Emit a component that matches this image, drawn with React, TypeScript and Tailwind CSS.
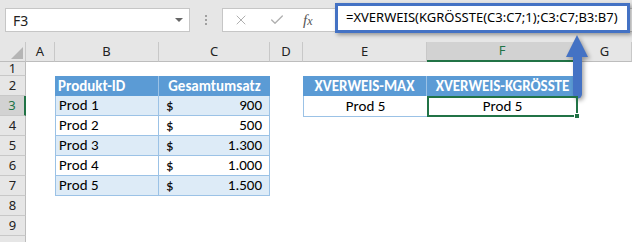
import { X, Check } from 'lucide-react';

// column widths of the sheet (row header first)
const cols = [
  { name: '', w: 'w-[26px]' },
  { name: 'A', w: 'w-[29px]' },
  { name: 'B', w: 'w-[104px]' },
  { name: 'C', w: 'w-[111px]' },
  { name: 'D', w: 'w-[33px]' },
  { name: 'E', w: 'w-[124px]' },
  { name: 'F', w: 'w-[151px]' },
  { name: 'G', w: 'w-[54px]' },
];

const sales = [
  { id: 'Prod 1', value: '900' },
  { id: 'Prod 2', value: '500' },
  { id: 'Prod 3', value: '1.300' },
  { id: 'Prod 4', value: '1.000' },
  { id: 'Prod 5', value: '1.500' },
];

const cellFont = "font-['Carlito','Lato',sans-serif] text-[15px] text-black";

const RowHead = ({ n, h = 'h-[20px]', active = false }: { n?: number; h?: string; active?: boolean }) => (
  <div
    className={`w-[26px] shrink-0 ${h} flex items-center justify-center border-b border-[#c8c8c8] text-[13px] font-['Noto_Sans',sans-serif] ${
      active ? 'bg-[#d2d2d2] text-[#217346] border-r-2 border-r-[#217346]' : 'bg-[#e6e6e6] text-[#222] border-r border-r-[#bdbdbd]'
    }`}
  >
    {n}
  </div>
);

const App = () => {
  return (
    <div className="relative w-[632px] h-[242px] overflow-hidden bg-white">
      {/* toolbar */}
      <div className="h-[42px] bg-[#e6e6e6] flex items-start pt-[8px] pl-[5px]">
        <div className="w-[185px] h-[24px] bg-white border border-[#c6c6c6] flex items-center justify-between pl-[7px] pr-[6px]">
          <span className="text-[14px] text-[#222] font-['Noto_Sans',sans-serif]">F3</span>
          <div className="w-0 h-0 border-l-[4px] border-r-[4px] border-t-[4px] border-l-transparent border-r-transparent border-t-[#666]" />
        </div>
        <div className="w-[32px] h-[24px] flex flex-col items-center justify-center gap-[2px]">
          <span className="w-[2px] h-[2px] bg-[#a0a0a0]" />
          <span className="w-[2px] h-[2px] bg-[#a0a0a0]" />
          <span className="w-[2px] h-[2px] bg-[#a0a0a0]" />
        </div>
        <div className="flex-1 h-[24px] bg-white border border-[#c6c6c6] border-r-0 flex items-center pl-[10px]">
          <X size={16} strokeWidth={1.5} className="text-[#b0b0b0]" />
          <Check size={16} strokeWidth={2} className="text-[#b0b0b0] ml-[20px]" />
          <span className="ml-[18px] text-[15px] italic text-[#555] font-['Liberation_Serif',serif]">
            f<span className="text-[12px]">x</span>
          </span>
        </div>
      </div>

      {/* column headers */}
      <div className="flex h-[20px]">
        {cols.map((c, i) => (
          <div
            key={i}
            className={`${c.w} shrink-0 h-[20px] flex items-center justify-center border-r border-[#c8c8c8] text-[13px] font-['Noto_Sans',sans-serif] ${
              c.name === 'F' ? 'bg-[#d2d2d2] text-[#217346] border-b-2 border-b-[#217346]' : 'bg-[#e6e6e6] text-[#222] border-b border-b-[#bdbdbd]'
            }`}
          >
            {i === 0 ? (
              <div className="w-full h-full flex items-end justify-end p-[2px]">
                <div className="w-0 h-0 [border-bottom:12px_solid_#b5b5b5] [border-left:12px_solid_transparent]" />
              </div>
            ) : (
              c.name
            )}
          </div>
        ))}
      </div>

      {/* row 1 */}
      <div className="flex">
        <RowHead n={1} h="h-[14px]" />
      </div>

      {/* row 2 - headers */}
      <div className="flex">
        <RowHead n={2} />
        <div className="w-[29px]" />
        <div className="w-[104px] h-[20px] bg-[#5b9bd5] border-r border-[#9bc2e6] flex items-center pl-[3px]">
          <span className={`${cellFont} !text-white font-bold`}>Produkt-ID</span>
        </div>
        <div className="w-[111px] h-[20px] bg-[#5b9bd5] flex items-center justify-center">
          <span className={`${cellFont} !text-white font-bold`}>Gesamtumsatz</span>
        </div>
        <div className="w-[33px]" />
        <div className="w-[124px] h-[20px] bg-[#5b9bd5] border-r border-[#9bc2e6] flex items-center justify-center">
          <span className={`${cellFont} !text-white font-bold`}>XVERWEIS-MAX</span>
        </div>
        <div className="w-[151px] h-[20px] bg-[#5b9bd5] flex items-center justify-center">
          <span className={`${cellFont} !text-white font-bold`}>XVERWEIS-KGRÖSSTE</span>
        </div>
      </div>

      {/* rows 3..7 */}
      {sales.map((s, i) => (
        <div key={s.id} className="flex h-[20px]">
          <RowHead n={i + 3} active={i === 0} />
          <div className="w-[29px]" />
          <div
            className={`w-[104px] h-[20px] border-l border-b border-r border-[#9bc2e6] flex items-center pl-[3px] ${
              i % 2 === 0 ? 'bg-[#ddebf7]' : 'bg-white'
            }`}
          >
            <span className={cellFont}>{s.id}</span>
          </div>
          <div
            className={`w-[111px] h-[20px] border-b border-r border-[#9bc2e6] flex items-center justify-between pl-[7px] pr-[7px] ${
              i % 2 === 0 ? 'bg-[#ddebf7]' : 'bg-white'
            }`}
          >
            <span className={cellFont}>$</span>
            <span className={cellFont}>{s.value}</span>
          </div>
          <div className="w-[33px]" />
          {i === 0 && (
            <>
              <div className="w-[124px] h-[21px] shrink-0 border-l border-b border-[#9bc2e6] flex items-center justify-center">
                <span className={cellFont}>Prod 5</span>
              </div>
              <div className="relative z-10 w-[151px] h-[21px] shrink-0 border-2 border-[#217346] flex items-center justify-center">
                <span className={cellFont}>Prod 5</span>
                <div className="absolute right-[-4px] bottom-[-4px] w-[6px] h-[6px] bg-[#217346] border border-white" />
              </div>
            </>
          )}
        </div>
      ))}

      {/* rows 8..10 */}
      <div className="flex">
        <RowHead n={8} />
      </div>
      <div className="flex">
        <RowHead n={9} />
      </div>
      <div className="flex">
        <RowHead />
      </div>

      {/* formula bar highlight */}
      <div className="absolute left-[335px] top-[3px] w-[295px] h-[30px] bg-white border-[3px] border-[#4472c4] shadow-[2px_2px_4px_rgba(0,0,0,0.35)] flex items-center pl-[8px]">
        <span className="text-[13px] text-black font-['Noto_Sans',sans-serif] whitespace-nowrap">
          =XVERWEIS(KGRÖSSTE(C3:C7;1);C3:C7;B3:B7)
        </span>
      </div>

      {/* arrow */}
      <svg className="absolute left-[564px] top-[34px] drop-shadow-[2px_2px_2px_rgba(0,0,0,0.35)]" width="28" height="66" viewBox="0 0 28 66">
        <path d="M13 1 L2 23 L24 23 Z" fill="#4472c4" />
        <path d="M9 22 H18 V60 a4.5 4.5 0 0 1 -9 0 Z" fill="#4472c4" />
      </svg>
    </div>
  );
};

export default App;
